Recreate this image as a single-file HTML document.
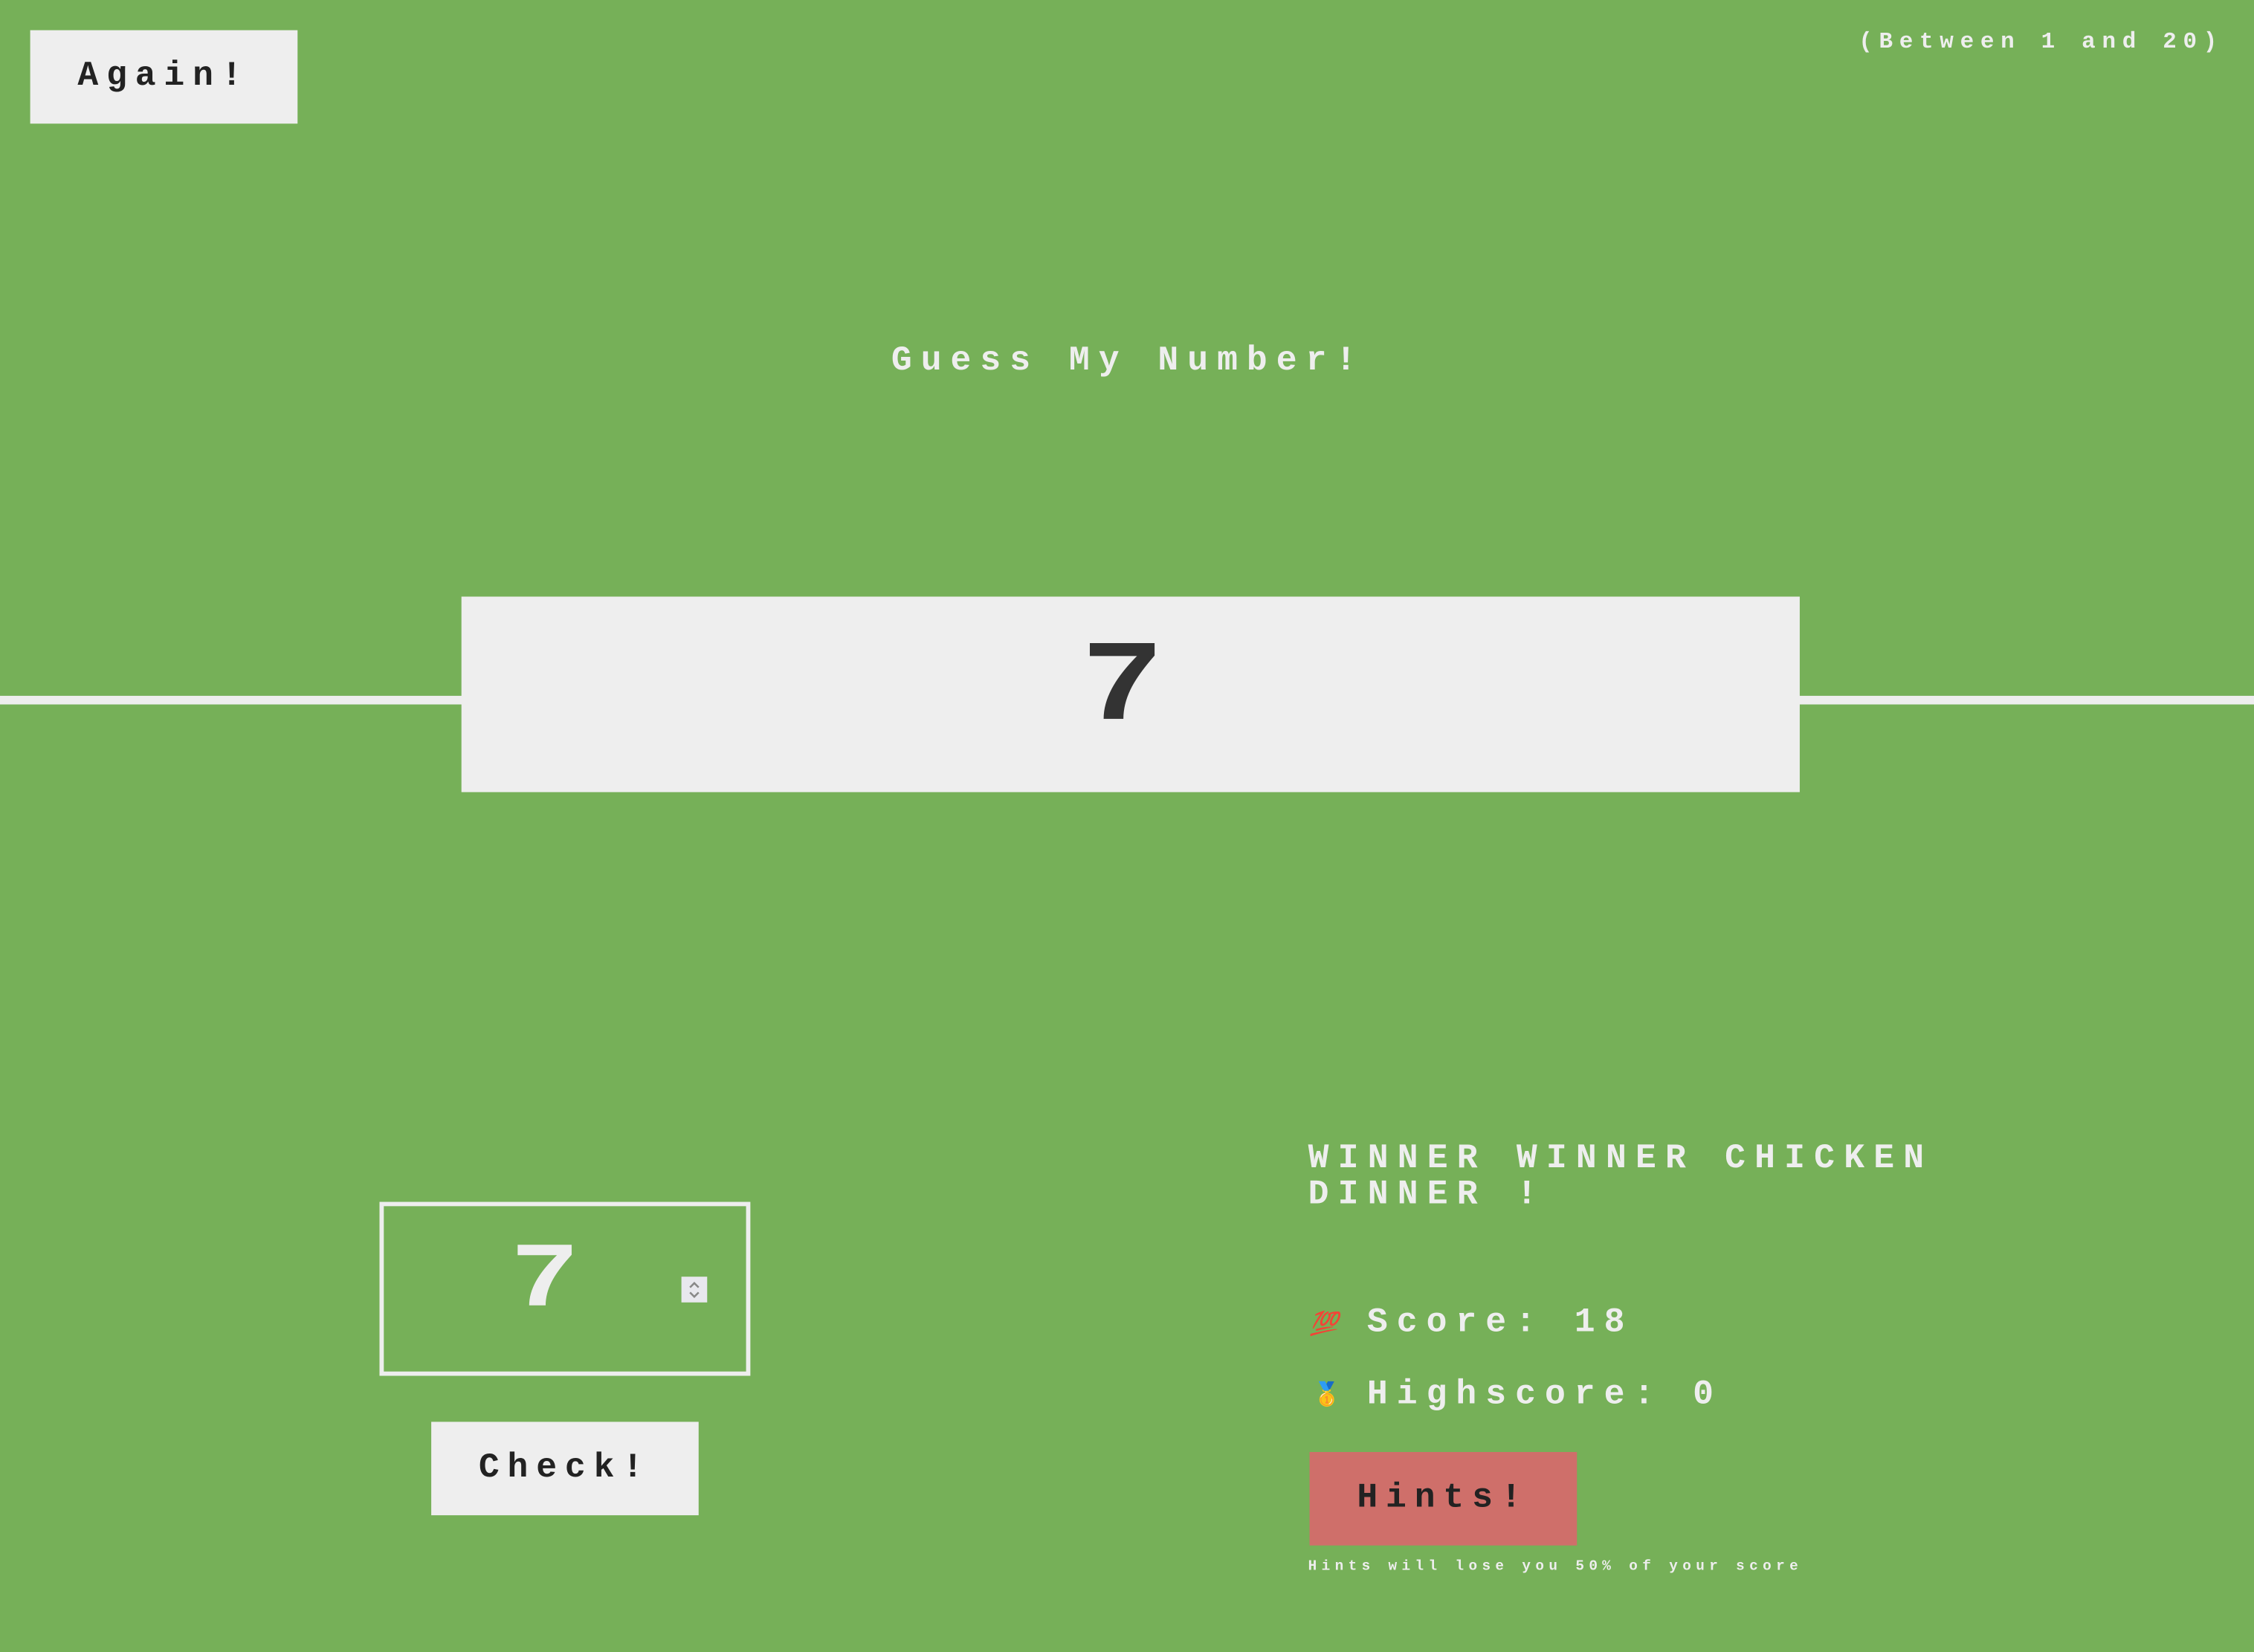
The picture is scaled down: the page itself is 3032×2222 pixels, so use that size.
<!DOCTYPE html>
<html><head><meta charset="utf-8"><style>
html,body{margin:0;padding:0;background:#76b058;overflow:hidden;width:3032px;height:2222px}
#c{position:absolute;left:0;top:0;width:1568px;height:1149px;transform:scale(1.93367);transform-origin:0 0;font-family:"Liberation Mono",monospace;font-weight:bold;color:#eee}
.a{position:absolute;white-space:nowrap}
.btn{position:absolute;background:#eee;color:#222;font-size:24px;letter-spacing:5.6px;display:flex;align-items:center;justify-content:center}
</style></head><body><div id="c">
<div class="btn" style="left:21px;top:21px;width:186px;height:65px">Again!</div>
<div class="a" style="left:1293px;top:20px;font-size:16px;letter-spacing:4.5px">(Between 1 and 20)</div>
<div class="a" style="left:620px;top:238px;font-size:24px;letter-spacing:6.2px">Guess My Number!</div>
<div class="a" style="left:0;top:484px;width:1568px;height:6px;background:#eee"></div>
<div class="a" style="left:321px;top:415px;width:931px;height:136px;background:#eee"></div>
<div class="a" style="left:752px;top:440px;font-size:80px;line-height:80px;color:#333;transform:scaleX(1.2);transform-origin:0 0">7</div>
<div class="a" style="left:264px;top:836px;width:252px;height:115px;border:3px solid #eee"></div>
<div class="a" style="left:355px;top:860px;font-size:64px;line-height:64px;transform:scaleX(1.25);transform-origin:0 0">7</div>
<svg class="a" style="left:474px;top:888px" width="18" height="18"><rect width="18" height="18" fill="#e8e8ee"/><path d="M6 7.5L9 4.5L12 7.5M6 11L9 14L12 11" stroke="#888" stroke-width="1.3" fill="none"/></svg>
<div class="btn" style="left:300px;top:989px;width:186px;height:65px">Check!</div>
<div class="a" style="left:910px;top:794px;font-size:24px;letter-spacing:6.3px;line-height:25px">WINNER WINNER CHICKEN<br>DINNER !</div>
<div class="a" style="left:911px;top:911px;font-size:16px;color:#c0302a;font-style:italic">💯</div>
<div class="a" style="left:951px;top:907px;font-size:24px;letter-spacing:6.2px">Score: 18</div>
<div class="a" style="left:913px;top:960px;font-size:16px;color:#d9a520">🥇</div>
<div class="a" style="left:951px;top:957px;font-size:24px;letter-spacing:6.2px">Highscore: 0</div>
<div class="btn" style="left:911px;top:1010px;width:186px;height:65px;background:#cf6f6a">Hints!</div>
<div class="a" style="left:910px;top:1085px;font-size:10px;letter-spacing:3.3px">Hints will lose you 50% of your score</div>
</div></body></html>
